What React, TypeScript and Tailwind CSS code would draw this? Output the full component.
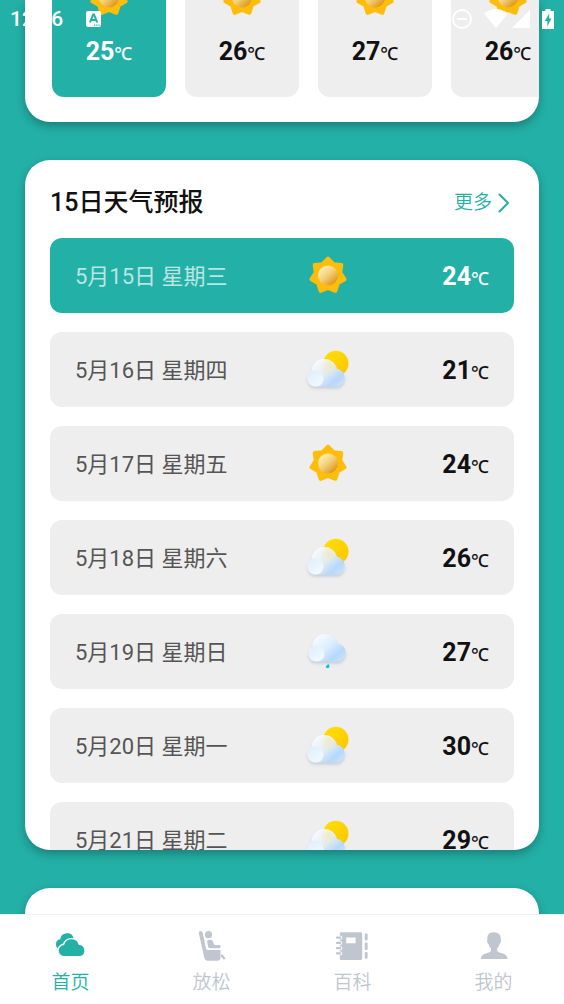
import { ReactNode, useId } from 'react';

type Weather = 'sunny' | 'cloudy' | 'rain';

interface DayForecast {
  date: string;
  weather: Weather;
  temp: number;
}

const HOURLY = [
  { id: 1, temp: 25 },
  { id: 2, temp: 26 },
  { id: 3, temp: 27 },
  { id: 4, temp: 26 },
];

const DAYS: DayForecast[] = [
  { date: '5月15日 星期三', weather: 'sunny', temp: 24 },
  { date: '5月16日 星期四', weather: 'cloudy', temp: 21 },
  { date: '5月17日 星期五', weather: 'sunny', temp: 24 },
  { date: '5月18日 星期六', weather: 'cloudy', temp: 26 },
  { date: '5月19日 星期日', weather: 'rain', temp: 27 },
  { date: '5月20日 星期一', weather: 'cloudy', temp: 30 },
  { date: '5月21日 星期二', weather: 'cloudy', temp: 29 },
];

// Seven pointed star around the centre of the 44px icon box
const SUN_POINTS = Array.from({ length: 14 }, (_, i) => {
  const radius = i % 2 === 0 ? 17 : 12.5;
  const angle = (i * Math.PI) / 7 - Math.PI / 2;
  return `${22 + radius * Math.cos(angle)},${21.5 + radius * Math.sin(angle)}`;
}).join(' ');

function SunIcon() {
  const id = useId();
  return (
    <svg viewBox="0 0 44 44" className="h-11 w-11 shrink-0" aria-hidden="true">
      <defs>
        <linearGradient id={`${id}core`} x1="0.15" y1="0.1" x2="0.85" y2="0.9">
          <stop offset="0" stopColor="#fff1b8" />
          <stop offset="0.5" stopColor="#f3cd73" />
          <stop offset="1" stopColor="#dc9413" />
        </linearGradient>
      </defs>
      <polygon points={SUN_POINTS} fill="#ffbd0b" stroke="#ffbd0b" strokeWidth="4" strokeLinejoin="round" />
      <circle cx="22" cy="21.5" r="10" fill={`url(#${id}core)`} />
    </svg>
  );
}

/** Cloud made of two lobes and a lighter puff, optionally lit by a sun behind it */
function CloudIcon({ rain = false }: { rain?: boolean }) {
  const id = useId();
  return (
    <svg viewBox="0 0 44 44" className="h-11 w-11 shrink-0 overflow-visible" aria-hidden="true">
      <defs>
        <linearGradient id={`${id}sun`} x1="0" y1="0" x2="1" y2="1">
          <stop offset="0" stopColor="#ffe100" />
          <stop offset="1" stopColor="#ffc400" />
        </linearGradient>
        <linearGradient id={`${id}cloud`} gradientUnits="userSpaceOnUse" x1="12" y1="12" x2="34" y2="37">
          <stop offset="0" stopColor="#f7faff" />
          <stop offset="0.45" stopColor={rain ? '#dcecff' : '#e2ecf3'} />
          <stop offset="0.8" stopColor="#b5d8fd" />
          <stop offset="1" stopColor="#c6e1fc" />
        </linearGradient>
        <radialGradient id={`${id}glow`} gradientUnits="userSpaceOnUse" cx="23" cy="18" r="9">
          <stop offset="0" stopColor="#f3e9b4" stopOpacity="0.75" />
          <stop offset="1" stopColor="#f3e9b4" stopOpacity="0" />
        </radialGradient>
        <linearGradient id={`${id}puff`} x1="0" y1="0" x2="0.6" y2="1">
          <stop offset="0" stopColor="#dceefc" />
          <stop offset="1" stopColor="#f1f9ff" />
        </linearGradient>
        <filter id={`${id}shadow`} x="-20%" y="-20%" width="140%" height="150%">
          <feDropShadow dx="0" dy="2" stdDeviation="1.5" floodColor="#7b8ea8" floodOpacity="0.35" />
        </filter>
      </defs>
      {!rain && <circle cx="29.8" cy="15.5" r="12.7" fill={`url(#${id}sun)`} />}
      <g transform={rain ? 'translate(1 -7)' : undefined}>
        <g filter={`url(#${id}shadow)`}>
          <path
            d="M9.5 38.5A8 8 0 0 1 5.4 23.7A13 13 0 0 1 31 20.7A9 9 0 0 1 31.2 38.5Z"
            fill={`url(#${id}cloud)`}
          />
        </g>
        {!rain && <circle cx="20.5" cy="20" r="9" fill={`url(#${id}glow)`} />}
        <circle cx="9.5" cy="30.5" r="8" fill={`url(#${id}puff)`} />
      </g>
      {rain && <path d="M22 33.5Q24 35.8 23.3 37.2Q21.8 39 20 37.4Q19.2 36 20.8 35.4Q21.8 35 22 33.5Z" fill="#00c9dc" />}
    </svg>
  );
}

function WeatherIcon({ weather }: { weather: Weather }) {
  if (weather === 'sunny') return <SunIcon />;
  return <CloudIcon rain={weather === 'rain'} />;
}

function Temperature({ value }: { value: number }) {
  return (
    <p className="text-[25px] leading-8 font-bold whitespace-nowrap">
      {value}
      <span className="font-['Noto_Sans','Noto_Sans_CJK_SC',sans-serif] text-[18px] leading-none font-medium">℃</span>
    </p>
  );
}

function StatusBar() {
  return (
    <div className="absolute inset-x-0 top-0 flex h-[38px] items-center justify-between px-[10px] text-white">
      <div className="flex items-center gap-[23px]">
        <span className="text-[21px] leading-7 font-medium">12:06</span>
        <svg viewBox="0 0 16 16" className="h-4 w-4" aria-hidden="true">
          <rect width="15" height="16" rx="2" fill="currentColor" />
          <path d="M4 11.5L7.2 3.5H8L11.2 11.5M5.3 9H9.9" fill="none" stroke="#23b0a7" strokeWidth="2" />
          <path d="M8 14.2H9.2M10.2 14.2H11.4M12.4 14.2H13.6" stroke="#23b0a7" strokeWidth="1.2" />
        </svg>
      </div>
      <div className="flex items-center">
        <svg viewBox="0 0 20 20" className="h-5 w-5" fill="none" stroke="currentColor" strokeWidth="1.8" aria-hidden="true">
          <circle cx="10" cy="10" r="9" />
          <path d="M5 10H15" />
        </svg>
        <svg viewBox="0 0 24 20" className="ml-3 h-5 w-6" fill="currentColor" aria-hidden="true">
          <path d="M0 4.5Q12 -4.5 24 4.5L12 19Z" />
        </svg>
        <svg viewBox="0 0 18 20" className="ml-1 h-5 w-[18px]" fill="currentColor" aria-hidden="true">
          <path d="M18 1V19H0Z" />
        </svg>
        <svg viewBox="0 0 12 20" className="ml-3 h-5 w-3" fill="currentColor" aria-hidden="true">
          <path d="M3.5 0H8.5V2H12V20H0V2H3.5Z" />
          <path d="M7.2 4.5L2.8 12H5.4V17.5L9.4 9.6H7.2Z" fill="#23b0a7" />
        </svg>
      </div>
    </div>
  );
}

function HourlyCard() {
  return (
    <section className="flex h-[122px] flex-col justify-end overflow-hidden rounded-b-[25px] bg-white pb-[25px] pl-[27px] shadow-[0_4px_10px_rgba(0,0,0,0.28)]">
      <div className="flex gap-[19px]">
        {HOURLY.map((hour, i) => (
          <div
            key={hour.id}
            className={`flex w-[114px] shrink-0 flex-col items-center gap-4 rounded-xl pb-[29px] ${
              i === 0 ? 'bg-[#23b0a7] text-white' : 'bg-[#eeeeee] text-[#111111]'
            }`}
          >
            <SunIcon />
            <Temperature value={hour.temp} />
          </div>
        ))}
      </div>
    </section>
  );
}

function ForecastCard() {
  return (
    <section className="overflow-hidden rounded-[25px] bg-white px-[25px] shadow-[0_4px_10px_rgba(0,0,0,0.28)]">
      <div className="flex h-[78px] items-center justify-between pt-2">
        <h2 className="text-[25px] leading-8 font-medium text-[#111111]">15日天气预报</h2>
        <a href="#more" className="mr-1 flex items-center gap-[6px] text-[19px] leading-7 font-[350] text-[#23b0a7]">
          更多
          <svg viewBox="0 0 12 20" className="h-5 w-3" fill="none" stroke="currentColor" strokeWidth="2" aria-hidden="true">
            <path d="M1.5 1.5L10 10L1.5 18.5" strokeLinecap="round" strokeLinejoin="round" />
          </svg>
        </a>
      </div>
      <ul className="flex h-[612px] flex-col gap-[19px] overflow-hidden">
        {DAYS.map((day, i) => (
          <li
            key={day.date}
            className={`grid h-[75px] shrink-0 grid-cols-[1fr_44px_139px] items-center rounded-xl px-[25px] ${
              i === 0 ? 'bg-[#23b0a7] text-white' : 'bg-[#eeeeee] text-[#111111]'
            }`}
          >
            <span className={`pt-[2px] text-[22px] leading-8 ${i === 0 ? 'text-white/70' : 'text-[#555555]'}`}>
              {day.date}
            </span>
            <WeatherIcon weather={day.weather} />
            <div className="justify-self-end pt-[2px]">
              <Temperature value={day.temp} />
            </div>
          </li>
        ))}
      </ul>
    </section>
  );
}

function NavIcon({ children }: { children: ReactNode }) {
  return (
    <svg viewBox="0 0 36 36" className="h-9 w-9" fill="currentColor" aria-hidden="true">
      {children}
    </svg>
  );
}

const NAV_ITEMS = [
  {
    label: '首页',
    icon: (
      <NavIcon>
        <path d="M7.5 21.4A5.1 5.1 0 0 1 7.2 11.3A7 7 0 0 1 20.6 9.5L12 21.4Z" />
        <path
          d="M11.3 28A5.5 5.5 0 0 1 11.1 17A7.6 7.6 0 0 1 25.8 17A5.6 5.6 0 0 1 27.2 28Z"
          stroke="#ffffff"
          strokeWidth="2.8"
        />
        <path d="M11.3 28A5.5 5.5 0 0 1 11.1 17A7.6 7.6 0 0 1 25.8 17A5.6 5.6 0 0 1 27.2 28Z" />
      </NavIcon>
    ),
  },
  {
    label: '放松',
    icon: (
      <NavIcon>
        <path d="M4.8 5Q4.8 3 6.6 3Q8.4 3 8.8 5L12 20.5Q12.4 22 14 22H26.5V29.5Q26.3 32.7 23.5 32.7H14Q11 32.7 10.2 29.5Z" />
        <circle cx="14.5" cy="6.7" r="3.6" />
        <path d="M13.2 13.5Q13.2 11.7 15 11.7H16.6Q18 11.7 18.6 13L20.4 17H25.5Q26.6 17 26.6 18.6Q26.6 20.3 25.5 20.3H16Q14.4 20.3 14 18.5Z" />
        <path d="M26.8 26.5H28.8L31.6 30.4L29.8 31.8L27 28.2Z" />
      </NavIcon>
    ),
  },
  {
    label: '百科',
    icon: (
      <NavIcon>
        <path
          fillRule="evenodd"
          d="M6.3 4.3H25.7Q27.2 4.3 27.2 5.8V30.5Q27.2 32 25.7 32H6.3Q4.8 32 4.8 30.5V5.8Q4.8 4.3 6.3 4.3ZM11.2 9.5V15.2H20.6V9.5Z"
        />
        <path d="M4.5 9.7H5.4M4.5 14.9H5.4M4.5 20.2H5.4M4.5 25.4H5.4" stroke="#ffffff" strokeWidth="3.8" strokeLinecap="round" />
        <path d="M2 9.7H5.2M2 14.9H5.2M2 20.2H5.2M2 25.4H5.2" stroke="currentColor" strokeWidth="2.2" strokeLinecap="round" />
        <rect x="29.8" y="5.6" width="2.8" height="6.8" rx="1" />
        <rect x="29.8" y="14.6" width="2.8" height="7.4" rx="1" />
        <rect x="29.8" y="24" width="2.8" height="6.8" rx="1" />
      </NavIcon>
    ),
  },
  {
    label: '我的',
    icon: (
      <NavIcon>
        <path d="M14 5Q18 3.6 21.5 5Q25 6.3 24.8 11.5Q25.2 12.2 24.8 14Q24.3 15.6 23.6 16Q22.8 19 21.2 20.2V23C22.3 25.5 31.6 24.6 31.6 31H4.8C4.8 24.6 14 25.5 15 23V20.2Q13.3 19 12.5 16Q11.6 15.6 11.2 14Q10.9 12.2 11.4 11.5Q10.8 6.8 14 5Z" />
      </NavIcon>
    ),
  },
];

function BottomNav() {
  return (
    <nav className="grid shrink-0 grid-cols-4 border-t border-[#f1f1f1] bg-white pt-[13px] pb-[2px]">
      {NAV_ITEMS.map((item, i) => (
        <a
          key={item.label}
          href={`#tab${i}`}
          className={`flex flex-col items-center ${i === 0 ? 'text-[#23b0a7]' : 'text-[#c0c6cf]'}`}
        >
          {item.icon}
          <span className="text-[19px] leading-[38px] font-[350]">{item.label}</span>
        </a>
      ))}
    </nav>
  );
}

export default function App() {
  return (
    <div className="relative flex h-screen flex-col overflow-hidden bg-[#23b0a7] font-['Roboto','Noto_Sans_CJK_SC',sans-serif]">
      <main className="flex min-h-0 flex-1 flex-col gap-[38px] overflow-hidden px-[25px] *:shrink-0">
        <HourlyCard />
        <ForecastCard />
        <section className="h-40 rounded-[25px] bg-white shadow-[0_4px_10px_rgba(0,0,0,0.28)]" />
      </main>
      <StatusBar />
      <BottomNav />
    </div>
  );
}
